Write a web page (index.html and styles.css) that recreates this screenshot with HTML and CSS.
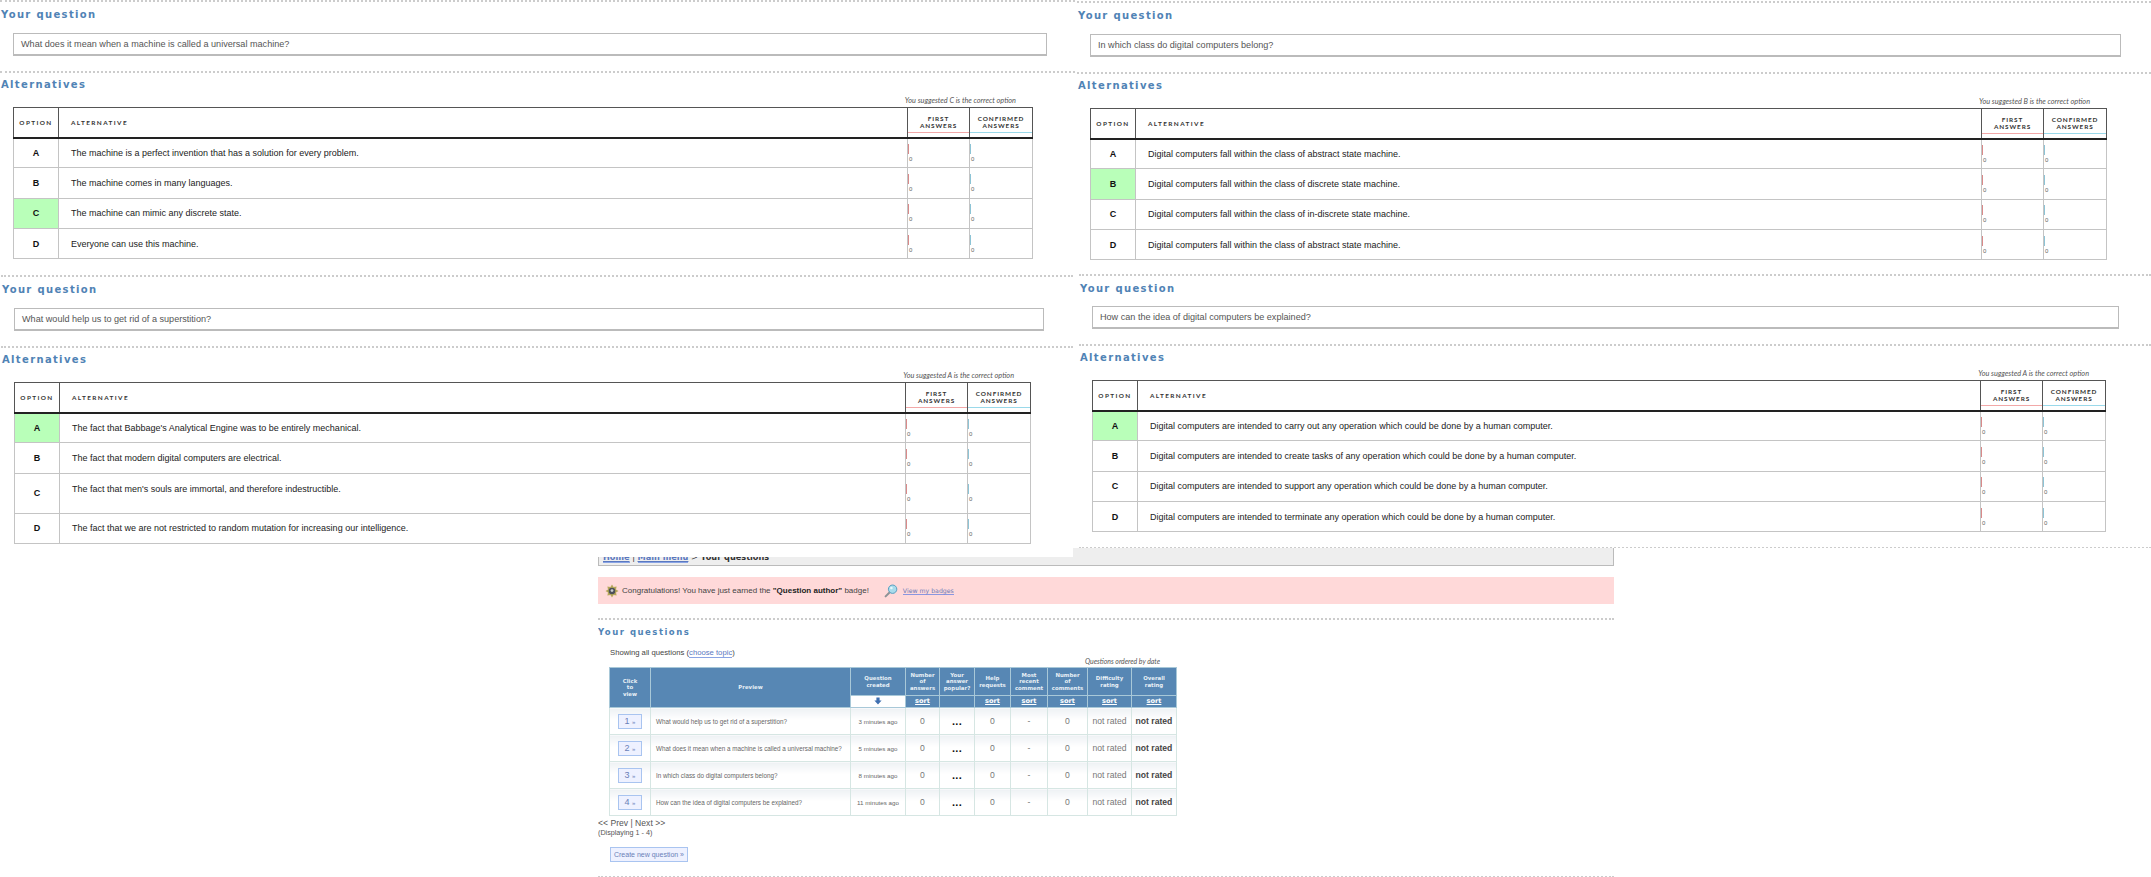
FILE: index.html
```html
<!DOCTYPE html>
<html lang="en">
<head>
    <meta charset="UTF-8">
    <meta name="viewport" content="width=device-width, initial-scale=1.0">
    <title>Your questions</title>
    <link rel="stylesheet" href="styles.css">
</head>
<body>
<div class="canvas">

    <!-- question list, sits under the other captures -->
    <div class="shot shot-main">
        <div class="crumbs"><a href="#">Home</a> | <a href="#">Main menu</a> &gt; <b>Your questions</b></div>

        <div class="banner">
            <svg class="badge-icon" width="14" height="14" viewBox="0 0 14 14">
                <path d="M7 0.5 L8.6 3 L11.6 2.4 L11 5.4 L13.5 7 L11 8.6 L11.6 11.6 L8.6 11 L7 13.5 L5.4 11 L2.4 11.6 L3 8.6 L0.5 7 L3 5.4 L2.4 2.4 L5.4 3 Z" fill="#b5a75a"/>
                <circle cx="7" cy="7" r="3.3" fill="#4c5058"/>
                <circle cx="7" cy="6.6" r="1.4" fill="#c9ccd0"/>
            </svg>
            <span class="banner-text">Congratulations! You have just earned the <b>"Question author"</b> badge!</span>
            <svg class="lens-icon" width="14" height="14" viewBox="0 0 14 14">
                <path d="M6 8 L1.6 12.4" stroke="#8d9296" stroke-width="2" stroke-linecap="round"/>
                <circle cx="8.6" cy="5.2" r="4.2" fill="#a9dcec" stroke="#5a9fc0" stroke-width="1"/>
                <circle cx="7.4" cy="4" r="1.3" fill="#e8f8fc"/>
            </svg>
            <a class="banner-link" href="#">View my badges</a>
        </div>

        <div class="rule"></div>
        <h2 class="main-title">Your questions</h2>
        <p class="showing">Showing all questions (<a href="#">choose topic</a>)</p>
        <p class="ordered">Questions ordered by date</p>

        <table class="questions">
            <thead>
                <tr class="head-top">
                    <th class="q-click" rowspan="2">Click<br>to<br>view</th>
                    <th class="q-preview" rowspan="2">Preview</th>
                    <th class="q-created">Question<br>created</th>
                    <th class="q-answers">Number<br>of<br>answers</th>
                    <th class="q-popular">Your<br>answer<br>popular?</th>
                    <th class="q-help">Help<br>requests</th>
                    <th class="q-recent">Most<br>recent<br>comment</th>
                    <th class="q-comments">Number<br>of<br>comments</th>
                    <th class="q-difficulty">Difficulty<br>rating</th>
                    <th class="q-overall">Overall<br>rating</th>
                </tr>
                <tr class="head-sort">
                    <th class="sorted">
                        <svg width="8" height="8" viewBox="0 0 8 8"><path d="M2.4 0.5 H5.6 V3.6 H7.6 L4 7.6 L0.4 3.6 H2.4 Z" fill="#3f6fb0"/></svg>
                    </th>
                    <th><a href="#">sort</a></th>
                    <th></th>
                    <th><a href="#">sort</a></th>
                    <th><a href="#">sort</a></th>
                    <th><a href="#">sort</a></th>
                    <th><a href="#">sort</a></th>
                    <th><a href="#">sort</a></th>
                </tr>
            </thead>
            <tbody>
                <tr>
                    <td><a class="num-btn" href="#">1 <i>»</i></a></td>
                    <td class="preview">What would help us to get rid of a superstition?</td>
                    <td class="created">3 minutes ago</td>
                    <td>0</td>
                    <td class="dots">...</td>
                    <td>0</td>
                    <td>-</td>
                    <td>0</td>
                    <td>not rated</td>
                    <td class="strong">not rated</td>
                </tr>
                <tr>
                    <td><a class="num-btn" href="#">2 <i>»</i></a></td>
                    <td class="preview">What does it mean when a machine is called a universal machine?</td>
                    <td class="created">5 minutes ago</td>
                    <td>0</td>
                    <td class="dots">...</td>
                    <td>0</td>
                    <td>-</td>
                    <td>0</td>
                    <td>not rated</td>
                    <td class="strong">not rated</td>
                </tr>
                <tr>
                    <td><a class="num-btn" href="#">3 <i>»</i></a></td>
                    <td class="preview">In which class do digital computers belong?</td>
                    <td class="created">8 minutes ago</td>
                    <td>0</td>
                    <td class="dots">...</td>
                    <td>0</td>
                    <td>-</td>
                    <td>0</td>
                    <td>not rated</td>
                    <td class="strong">not rated</td>
                </tr>
                <tr>
                    <td><a class="num-btn" href="#">4 <i>»</i></a></td>
                    <td class="preview">How can the idea of digital computers be explained?</td>
                    <td class="created">11 minutes ago</td>
                    <td>0</td>
                    <td class="dots">...</td>
                    <td>0</td>
                    <td>-</td>
                    <td>0</td>
                    <td>not rated</td>
                    <td class="strong">not rated</td>
                </tr>
            </tbody>
        </table>

        <div class="pager"><span class="pager-links">&lt;&lt; Prev | Next &gt;&gt;</span><br>(Displaying 1 - 4)</div>
        <a class="create-btn" href="#">Create new question »</a>
        <div class="rule rule-end"></div>
    </div>

    <!-- capture 1 -->
    <div class="shot shot-a">
        <div class="rule"></div>
        <h2>Your question</h2>
        <div class="question-box">What does it mean when a machine is called a universal machine?</div>
        <div class="rule rule-mid"></div>
        <h2>Alternatives</h2>
        <div class="alts">
            <p class="suggested">You suggested C is the correct option</p>
            <table class="answers">
                <thead>
                    <tr>
                        <th class="col-option">OPTION</th>
                        <th class="col-alt">ALTERNATIVE</th>
                        <th class="col-first"><div class="stat-label first">FIRST<br>ANSWERS</div></th>
                        <th class="col-conf"><div class="stat-label conf">CONFIRMED<br>ANSWERS</div></th>
                    </tr>
                </thead>
                <tbody>
                    <tr><td class="letter">A</td><td class="text">The machine is a perfect invention that has a solution for every problem.</td><td class="stat"><div class="bar red"></div><div class="count">0</div></td><td class="stat"><div class="bar blue"></div><div class="count">0</div></td></tr>
                    <tr><td class="letter">B</td><td class="text">The machine comes in many languages.</td><td class="stat"><div class="bar red"></div><div class="count">0</div></td><td class="stat"><div class="bar blue"></div><div class="count">0</div></td></tr>
                    <tr><td class="letter correct">C</td><td class="text">The machine can mimic any discrete state.</td><td class="stat"><div class="bar red"></div><div class="count">0</div></td><td class="stat"><div class="bar blue"></div><div class="count">0</div></td></tr>
                    <tr><td class="letter">D</td><td class="text">Everyone can use this machine.</td><td class="stat"><div class="bar red"></div><div class="count">0</div></td><td class="stat"><div class="bar blue"></div><div class="count">0</div></td></tr>
                </tbody>
            </table>
        </div>
    </div>

    <!-- capture 2 -->
    <div class="shot shot-b">
        <div class="rule"></div>
        <h2>Your question</h2>
        <div class="question-box">In which class do digital computers belong?</div>
        <div class="rule rule-mid"></div>
        <h2>Alternatives</h2>
        <div class="alts">
            <p class="suggested">You suggested B is the correct option</p>
            <table class="answers">
                <thead>
                    <tr>
                        <th class="col-option">OPTION</th>
                        <th class="col-alt">ALTERNATIVE</th>
                        <th class="col-first"><div class="stat-label first">FIRST<br>ANSWERS</div></th>
                        <th class="col-conf"><div class="stat-label conf">CONFIRMED<br>ANSWERS</div></th>
                    </tr>
                </thead>
                <tbody>
                    <tr><td class="letter">A</td><td class="text">Digital computers fall within the class of abstract state machine.</td><td class="stat"><div class="bar red"></div><div class="count">0</div></td><td class="stat"><div class="bar blue"></div><div class="count">0</div></td></tr>
                    <tr><td class="letter correct">B</td><td class="text">Digital computers fall within the class of discrete state machine.</td><td class="stat"><div class="bar red"></div><div class="count">0</div></td><td class="stat"><div class="bar blue"></div><div class="count">0</div></td></tr>
                    <tr><td class="letter">C</td><td class="text">Digital computers fall within the class of in-discrete state machine.</td><td class="stat"><div class="bar red"></div><div class="count">0</div></td><td class="stat"><div class="bar blue"></div><div class="count">0</div></td></tr>
                    <tr><td class="letter">D</td><td class="text">Digital computers fall within the class of abstract state machine.</td><td class="stat"><div class="bar red"></div><div class="count">0</div></td><td class="stat"><div class="bar blue"></div><div class="count">0</div></td></tr>
                </tbody>
            </table>
        </div>
    </div>

    <!-- capture 3 -->
    <div class="shot shot-c">
        <div class="rule"></div>
        <h2>Your question</h2>
        <div class="question-box">What would help us to get rid of a superstition?</div>
        <div class="rule rule-mid"></div>
        <h2>Alternatives</h2>
        <div class="alts">
            <p class="suggested">You suggested A is the correct option</p>
            <table class="answers">
                <thead>
                    <tr>
                        <th class="col-option">OPTION</th>
                        <th class="col-alt">ALTERNATIVE</th>
                        <th class="col-first"><div class="stat-label first">FIRST<br>ANSWERS</div></th>
                        <th class="col-conf"><div class="stat-label conf">CONFIRMED<br>ANSWERS</div></th>
                    </tr>
                </thead>
                <tbody>
                    <tr><td class="letter correct">A</td><td class="text">The fact that Babbage's Analytical Engine was to be entirely mechanical.</td><td class="stat"><div class="bar red"></div><div class="count">0</div></td><td class="stat"><div class="bar blue"></div><div class="count">0</div></td></tr>
                    <tr><td class="letter">B</td><td class="text">The fact that modern digital computers are electrical.</td><td class="stat"><div class="bar red"></div><div class="count">0</div></td><td class="stat"><div class="bar blue"></div><div class="count">0</div></td></tr>
                    <tr class="tall"><td class="letter">C</td><td class="text">The fact that men's souls are immortal, and therefore indestructible.</td><td class="stat"><div class="bar red"></div><div class="count">0</div></td><td class="stat"><div class="bar blue"></div><div class="count">0</div></td></tr>
                    <tr><td class="letter">D</td><td class="text">The fact that we are not restricted to random mutation for increasing our intelligence.</td><td class="stat"><div class="bar red"></div><div class="count">0</div></td><td class="stat"><div class="bar blue"></div><div class="count">0</div></td></tr>
                </tbody>
            </table>
        </div>
    </div>

    <!-- capture 4 -->
    <div class="shot shot-d">
        <div class="rule"></div>
        <h2>Your question</h2>
        <div class="question-box">How can the idea of digital computers be explained?</div>
        <div class="rule rule-mid"></div>
        <h2>Alternatives</h2>
        <div class="alts">
            <p class="suggested">You suggested A is the correct option</p>
            <table class="answers">
                <thead>
                    <tr>
                        <th class="col-option">OPTION</th>
                        <th class="col-alt">ALTERNATIVE</th>
                        <th class="col-first"><div class="stat-label first">FIRST<br>ANSWERS</div></th>
                        <th class="col-conf"><div class="stat-label conf">CONFIRMED<br>ANSWERS</div></th>
                    </tr>
                </thead>
                <tbody>
                    <tr><td class="letter correct">A</td><td class="text">Digital computers are intended to carry out any operation which could be done by a human computer.</td><td class="stat"><div class="bar red"></div><div class="count">0</div></td><td class="stat"><div class="bar blue"></div><div class="count">0</div></td></tr>
                    <tr><td class="letter">B</td><td class="text">Digital computers are intended to create tasks of any operation which could be done by a human computer.</td><td class="stat"><div class="bar red"></div><div class="count">0</div></td><td class="stat"><div class="bar blue"></div><div class="count">0</div></td></tr>
                    <tr><td class="letter">C</td><td class="text">Digital computers are intended to support any operation which could be done by a human computer.</td><td class="stat"><div class="bar red"></div><div class="count">0</div></td><td class="stat"><div class="bar blue"></div><div class="count">0</div></td></tr>
                    <tr><td class="letter">D</td><td class="text">Digital computers are intended to terminate any operation which could be done by a human computer.</td><td class="stat"><div class="bar red"></div><div class="count">0</div></td><td class="stat"><div class="bar blue"></div><div class="count">0</div></td></tr>
                </tbody>
            </table>
        </div>
        <div class="rule rule-last"></div>
    </div>

</div>
</body>
</html>
```

FILE: styles.css
```css
html,
body {
    margin: 0;
    padding: 0;
    background-color: #fff;
}

body {
    font-family: "Liberation Sans", Arial, sans-serif;
    color: #222;
}

.canvas {
    position: relative;
    width: 2151px;
    height: 877px;
    overflow: hidden;
}

/* the captures are windows on a free canvas */
.shot {
    position: absolute;
    background-color: #fff;
    overflow: hidden;
}

.shot-a { left: 0; top: 0; width: 1075px; height: 275px; }
.shot-b { left: 1077px; top: 1px; width: 1074px; height: 274px; }
.shot-c { left: 1px; top: 275px; width: 1072px; height: 282px; }
.shot-d { left: 1079px; top: 274px; width: 1072px; height: 274px; }
.shot-main { left: 598px; top: 548px; width: 1016px; height: 329px; background: none; }

.rule {
    border-top: 2px dotted #ccc;
}

.rule-mid {
    margin-top: 15px;
}

.rule-last {
    margin-top: 15px;
}

h2 {
    margin: 7px 0 0 1px;
    font-family: "DejaVu Sans", Verdana, sans-serif;
    font-size: 10px;
    line-height: 12px;
    font-weight: bold;
    letter-spacing: 1.35px;
    color: #5083b5;
}

.question-box {
    box-sizing: border-box;
    height: 23px;
    margin: 12px 0 0 13px;
    padding-left: 7px;
    border: 1px solid #bbb;
    border-bottom-width: 2px;
    font-size: 9.1px;
    line-height: 20px;
    color: #555;
}

.rule-mid + h2 {
    margin-top: 6px;
}

.alts {
    margin: 5px 0 0 13px;
}

.suggested {
    margin: 0 0 1px;
    padding-right: 17px;
    font-family: Lato, "Open Sans", sans-serif;
    font-size: 7.3px;
    line-height: 10px;
    font-style: italic;
    text-align: right;
    color: #555;
}

.shot-a .question-box { width: 1034px; }
.shot-b .question-box { width: 1031px; }
.shot-c .question-box { width: 1030px; }
.shot-d .question-box { width: 1027px; margin-top: 11px; }

.shot-a .alts { width: 1020px; }
.shot-b .alts { width: 1017px; }
.shot-c .alts { width: 1017px; }
.shot-d .alts { width: 1014px; }

.answers {
    width: 100%;
    table-layout: fixed;
    border-collapse: collapse;
    border: 1px solid #bbb;
}

.answers thead tr {
    height: 30px;
}

.answers th {
    padding: 0;
    border: 1px solid #555;
    border-bottom: 2px solid #222;
    font-family: Lato, "Open Sans", sans-serif;
    font-size: 6.4px;
    font-weight: bold;
    letter-spacing: 1.4px;
    color: #333;
}

.col-option { width: 44px; }
.col-first { width: 61px; }
.col-conf { width: 62px; }

.answers .col-alt {
    text-align: left;
    padding-left: 12px;
}

.stat-label {
    line-height: 7.4px;
    padding: 5px 0 2px;
    margin-bottom: 2px;
    border-bottom: 1px solid;
    letter-spacing: 0.9px;
}

.stat-label.first { border-bottom-color: #f2a8a8; }
.stat-label.conf { border-bottom-color: #9ad9ea; }

.answers tbody tr {
    height: 30.3px;
}

.answers tbody tr.tall {
    height: 40px;
}

.answers td {
    padding: 0;
    border: 1px solid #c4c4c4;
    font-size: 9px;
}

.answers .letter {
    text-align: center;
    font-weight: bold;
    color: #111;
}

.answers .text {
    padding-left: 12px;
    color: #222;
}

.answers .correct {
    background-color: #b9ffb9;
}

.answers .tall .text {
    vertical-align: top;
    padding-top: 10px;
}

.bar {
    width: 1px;
    height: 10px;
}

.bar.red { background-color: #d98a8a; }
.bar.blue { background-color: #8dc4d6; }

.count {
    margin: 2px 0 0 1px;
    font-size: 6px;
    line-height: 6px;
    color: #666;
}

/* question list */
.crumbs {
    box-sizing: border-box;
    height: 18px;
    padding-left: 4px;
    background-color: #eee;
    border: 1px solid #bbb;
    border-top: none;
    font-family: "DejaVu Sans", Verdana, sans-serif;
    font-size: 8.2px;
    line-height: 18px;
    color: #333;
}

.crumbs a {
    color: #5a78c0;
    font-weight: bold;
    border-bottom: 1px solid #8aa4e4;
}

.banner {
    display: flex;
    align-items: center;
    height: 27px;
    margin-top: 11px;
    padding-left: 7px;
    background-color: #ffd9d9;
    font-size: 8px;
    color: #444;
}

.banner b {
    color: #222;
}

.banner-text {
    margin-left: 3px;
}

.lens-icon {
    margin-left: 15px;
}

.banner-link {
    margin-left: 5px;
    font-family: "DejaVu Sans", Verdana, sans-serif;
    font-size: 6.2px;
    color: #6c7ab8;
    text-decoration: none;
    border-bottom: 1px solid #8a96e0;
}

.shot-main .rule {
    margin-top: 14px;
}

.main-title {
    margin: 6px 0 0 0;
    font-size: 8.5px;
    letter-spacing: 1.5px;
}

.showing {
    margin: 9px 0 0 12px;
    font-size: 7.7px;
    line-height: 12px;
    color: #444;
}

.showing a,
.pager a {
    color: #5a78c0;
    text-decoration: none;
    border-bottom: 1px solid #8aa4e4;
}

.ordered {
    margin: -2px 0 0;
    padding-right: 454px;
    font-family: Lato, "Open Sans", sans-serif;
    font-size: 6.9px;
    line-height: 9px;
    font-style: italic;
    text-align: right;
    color: #555;
}

.questions {
    table-layout: fixed;
    border-collapse: collapse;
    width: 568px;
    margin: 1px 0 0 11px;
}

.q-click { width: 40px; }
.q-preview { width: 199px; }
.q-created { width: 54px; }
.q-answers { width: 33px; }
.q-popular { width: 34px; }
.q-help { width: 35px; }
.q-recent { width: 36px; }
.q-comments { width: 39px; }
.q-difficulty { width: 43px; }
.q-overall { width: 44px; }

.questions th {
    padding: 0;
    background-color: #5787b4;
    border: 1px solid #a8c8d8;
    font-family: "DejaVu Sans", Verdana, sans-serif;
    font-size: 5.4px;
    line-height: 6.4px;
    color: #e8f0f6;
}

.head-top {
    height: 28px;
}

.head-sort {
    height: 12px;
}

.questions .sorted {
    background-color: #fff;
    line-height: 8px;
}

.head-sort a {
    font-size: 6.6px;
    color: #fff;
}

.questions td {
    height: 26px;
    padding: 0;
    background: linear-gradient(#eef1f4, #fff 45%);
    border: 1px solid #d6e6e3;
    text-align: center;
    font-size: 8.6px;
    color: #777;
}

.num-btn {
    display: inline-block;
    box-sizing: border-box;
    width: 24px;
    height: 15px;
    background-color: #eef1ff;
    border: 1px solid #a9c4f0;
    font-size: 9px;
    line-height: 13px;
    color: #6a7fb8;
    text-decoration: none;
}

.num-btn i {
    font-style: normal;
    font-size: 6px;
}

.questions .preview {
    padding-left: 5px;
    text-align: left;
    font-size: 6.3px;
    color: #666;
}

.questions .created {
    font-size: 6.2px;
    color: #666;
}

.questions .dots {
    font-size: 11px;
    font-weight: bold;
    letter-spacing: 0.3px;
    color: #111;
}

.questions .strong {
    font-weight: bold;
    color: #444;
}

.pager {
    margin-top: 3px;
    font-size: 7.2px;
    line-height: 9px;
    color: #555;
}

.pager-links {
    font-size: 8.6px;
}

.create-btn {
    display: block;
    box-sizing: border-box;
    width: 78px;
    height: 15px;
    margin: 10px 0 0 12px;
    background-color: #eef1ff;
    border: 1px solid #a9c4f0;
    font-size: 7px;
    line-height: 13px;
    text-align: center;
    color: #6a7fb8;
    text-decoration: none;
}

.shot-main .rule-end {
    margin-top: 14px;
}
```
